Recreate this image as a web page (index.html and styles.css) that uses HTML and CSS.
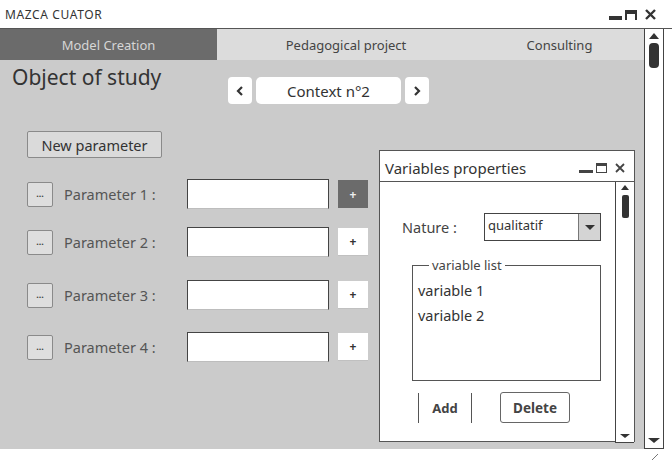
FILE: index.html
```html
<!DOCTYPE html>
<html lang="en">
<head>
<meta charset="utf-8">
<title>MAZCA CUATOR</title>
<link rel="stylesheet" href="styles.css">
</head>
<body>
<div class="window">
  <header class="titlebar">
    <span class="app-name">MAZCA CUATOR</span>
    <div class="win-controls">
      <span class="ctl-min"></span>
      <span class="ctl-max"></span>
      <svg class="ctl-close" width="11" height="11" viewBox="0 0 11 11"><path d="M1 1 L10 10 M10 1 L1 10" stroke="#333" stroke-width="2.4"/></svg>
    </div>
  </header>

  <div class="frame">
    <div class="main">
      <nav class="tabs">
        <span class="tab active">Model Creation</span>
        <span class="tab">Pedagogical project</span>
        <span class="tab">Consulting</span>
      </nav>

      <section class="workspace">
        <div class="heading-row">
          <h1 class="heading">Object of study</h1>
          <div class="context-nav">
            <button class="nav-btn">
              <svg width="8" height="10" viewBox="0 0 8 10"><path d="M6 1 L2 5 L6 9" fill="none" stroke="#333" stroke-width="2.2"/></svg>
            </button>
            <span class="context-label">Context n°2</span>
            <button class="nav-btn">
              <svg width="8" height="10" viewBox="0 0 8 10"><path d="M2 1 L6 5 L2 9" fill="none" stroke="#333" stroke-width="2.2"/></svg>
            </button>
          </div>
        </div>

        <button class="btn-new">New parameter</button>

        <div class="params">
          <div class="param-row">
            <button class="btn-more">...</button>
            <span class="param-label">Parameter 1 :</span>
            <span class="param-input"></span>
            <button class="btn-plus dark">+</button>
          </div>
          <div class="param-row">
            <button class="btn-more">...</button>
            <span class="param-label">Parameter 2 :</span>
            <span class="param-input"></span>
            <button class="btn-plus">+</button>
          </div>
          <div class="param-row">
            <button class="btn-more">...</button>
            <span class="param-label">Parameter 3 :</span>
            <span class="param-input"></span>
            <button class="btn-plus">+</button>
          </div>
          <div class="param-row">
            <button class="btn-more">...</button>
            <span class="param-label">Parameter 4 :</span>
            <span class="param-input"></span>
            <button class="btn-plus">+</button>
          </div>
        </div>
      </section>
    </div>

    <div class="scrollbar">
      <span class="arrow-up"></span>
      <span class="thumb"></span>
      <span class="arrow-down"></span>
    </div>
  </div>

  <footer class="statusbar">
    <svg class="grip" width="8" height="8" viewBox="0 0 8 8"><path d="M1 7 L7 1" stroke="#777" stroke-width="1"/></svg>
  </footer>

  <div class="dialog">
    <div class="dialog-title">
      <span>Variables properties</span>
      <div class="win-controls small">
        <span class="ctl-min"></span>
        <span class="ctl-max"></span>
        <svg class="ctl-close" width="10" height="10" viewBox="0 0 10 10"><path d="M1 1 L9 9 M9 1 L1 9" stroke="#444" stroke-width="1.8"/></svg>
      </div>
    </div>
    <div class="dialog-body">
      <div class="dialog-content">
        <div class="nature-row">
          <span class="nature-label">Nature :</span>
          <div class="select">
            <span class="select-value">qualitatif</span>
            <span class="select-btn"><span class="tri-down"></span></span>
          </div>
        </div>

        <fieldset class="var-list">
          <legend>variable list</legend>
          <div class="var-item">variable 1</div>
          <div class="var-item">variable 2</div>
        </fieldset>

        <div class="dialog-actions">
          <button class="btn-add">Add</button>
          <button class="btn-delete">Delete</button>
        </div>
      </div>
      <div class="scrollbar small">
        <span class="arrow-up"></span>
        <span class="thumb"></span>
        <span class="arrow-down"></span>
      </div>
    </div>
  </div>
</div>
</body>
</html>
```

FILE: styles.css
```css
* { box-sizing: border-box; }

html, body {
  margin: 0;
  padding: 0;
  background: #fff;
}

body {
  font-family: "Noto Sans", "DejaVu Sans", sans-serif;
  color: #333;
  width: 672px;
  height: 463px;
  overflow: hidden;
}

button {
  font-family: inherit;
  padding: 0;
  cursor: pointer;
}

.window {
  position: relative;
  display: flex;
  flex-direction: column;
  height: 463px;
}

/* ---- title bar ---- */
.titlebar {
  height: 29px;
  display: flex;
  align-items: center;
  justify-content: space-between;
  padding: 0 16px 0 5px;
  border-bottom: 1px solid #555;
}

.app-name {
  font-size: 12px;
  letter-spacing: 0.6px;
  color: #333;
  padding-top: 1px;
}

.win-controls {
  display: flex;
  align-items: flex-end;
  gap: 3px;
  padding-top: 2px;
}

.win-controls .ctl-close { margin-left: 5px; }

.ctl-min {
  width: 13px;
  height: 4px;
  background: #333;
  margin-bottom: 1px;
}

.ctl-max {
  width: 12px;
  height: 10px;
  border: 2px solid #333;
  border-top-width: 4px;
  border-bottom: none;
  margin-bottom: 1px;
}

.ctl-close { display: block; margin-bottom: 1px; }

/* ---- frame: main area + vertical scrollbar ---- */
.frame {
  display: flex;
  height: 420px;
  padding-right: 8px;
}

.main {
  flex: 1;
  min-width: 0;
  display: flex;
  flex-direction: column;
}

.tabs {
  height: 31px;
  display: flex;
  background: #dcdcdc;
}

.tab {
  display: flex;
  align-items: center;
  justify-content: center;
  font-size: 13px;
  color: #444;
  width: 217px;
  flex-shrink: 0;
}

.tab:nth-child(2) { width: 258px; }
.tab:nth-child(3) { flex: 1; width: auto; }

.tab.active {
  background: #6b6b6b;
  color: #d6d6d6;
}

.workspace {
  flex: 1;
  background: #cbcbcb;
  padding: 3px 0 0 0;
}

.heading-row {
  display: flex;
  align-items: flex-start;
}

.heading {
  flex: 0 0 228px;
  margin: 0;
  padding-left: 12px;
  font-weight: normal;
  font-size: 21px;
  line-height: 28px;
  color: #333;
}

.context-nav {
  display: flex;
  gap: 4px;
  margin-top: 14px;
}

.nav-btn {
  width: 24px;
  height: 27px;
  border: none;
  background: #fff;
  border-radius: 4px;
  display: flex;
  align-items: center;
  justify-content: center;
}

.context-label {
  width: 145px;
  height: 27px;
  background: #fff;
  border-radius: 5px;
  display: flex;
  align-items: center;
  justify-content: center;
  font-size: 15px;
  color: #333;
}

.btn-new {
  display: block;
  margin: 27px 0 0 27px;
  width: 135px;
  height: 27px;
  background: #dadada;
  border: 1px solid #8a8a8a;
  border-radius: 2px;
  font-size: 14.5px;
  color: #333;
}

.params {
  display: flex;
  flex-direction: column;
  margin-top: 21px;
  padding-left: 27px;
}

.param-row {
  display: flex;
  align-items: center;
  height: 30px;
}

.param-row:nth-child(2) { margin-top: 18px; }
.param-row:nth-child(3) { margin-top: 23px; }
.param-row:nth-child(4) { margin-top: 22px; }

.btn-more {
  width: 26px;
  height: 25px;
  background: #dedede;
  border: 1px solid #8a8a8a;
  border-radius: 2px;
  font-size: 9px;
  line-height: 10px;
  color: #444;
  font-weight: bold;
}

.param-label {
  width: 134px;
  padding-left: 11px;
  font-size: 14.5px;
  color: #555;
}

.param-input {
  width: 142px;
  height: 30px;
  background: #fff;
  border: 1px solid #444;
  border-bottom-color: #bdbdbd;
}

.btn-plus {
  width: 30px;
  height: 28px;
  margin-left: 9px;
  background: #fff;
  border: none;
  border-bottom: 1px solid #c0c0c0;
  font-size: 12px;
  font-weight: bold;
  color: #333;
}

.btn-plus.dark {
  background: #6b6b6b;
  color: #eee;
  border-bottom: none;
}

/* ---- scrollbars ---- */
.scrollbar {
  flex-shrink: 0;
  width: 20px;
  border: 1px solid #444;
  border-top: none;
  background: #fff;
  display: flex;
  flex-direction: column;
  align-items: center;
  padding-top: 4px;
}

.arrow-up {
  width: 0;
  height: 0;
  border-left: 5px solid transparent;
  border-right: 5px solid transparent;
  border-bottom: 6px solid #333;
}

.thumb {
  width: 10px;
  height: 25px;
  margin-top: 4px;
  background: #333;
  border-radius: 4px;
}

.arrow-down {
  margin-top: auto;
  margin-bottom: 5px;
  width: 0;
  height: 0;
  border-left: 6px solid transparent;
  border-right: 6px solid transparent;
  border-top: 5px solid #333;
}

.statusbar {
  flex: 1;
  display: flex;
  justify-content: flex-end;
  align-items: flex-end;
  padding: 0 13px 2px 0;
}

/* ---- floating dialog ---- */
.dialog {
  position: absolute;
  left: 379px;
  top: 150px;
  width: 256px;
  height: 292px;
  background: #fff;
  border: 1px solid #555;
  display: flex;
  flex-direction: column;
}

.dialog-title {
  height: 31px;
  display: flex;
  align-items: center;
  justify-content: space-between;
  padding: 4px 9px 0 5px;
  border-bottom: 1px solid #555;
  font-size: 15px;
  color: #333;
}

.win-controls.small { gap: 3px; padding-top: 0; }
.win-controls.small .ctl-close { margin-left: 5px; }
.win-controls.small .ctl-min { width: 14px; height: 3px; background: #444; }
.win-controls.small .ctl-max { width: 11px; height: 10px; border: 1.5px solid #444; border-top-width: 3px; border-bottom: 1.5px solid #444; }

.dialog-body {
  flex: 1;
  display: flex;
}

.dialog-content {
  flex: 1;
  padding: 31px 0 0 22px;
}

.scrollbar.small {
  width: 19px;
  border-top: none;
  border-right: none;
  border-bottom: 1px solid #444;
  margin-bottom: -2px;
  padding-top: 3px;
}

.scrollbar.small .arrow-up { border-left-width: 4px; border-right-width: 4px; border-bottom-width: 5px; }
.scrollbar.small .thumb { width: 7px; height: 23px; margin-top: 5px; border-radius: 2px; }
.scrollbar.small .arrow-down { border-left-width: 5px; border-right-width: 5px; border-top-width: 4px; margin-bottom: 4px; }

.nature-row {
  display: flex;
  align-items: center;
  height: 28px;
}

.nature-label {
  width: 82px;
  font-size: 14.5px;
  color: #444;
}

.select {
  width: 117px;
  height: 28px;
  display: flex;
  border: 1px solid #444;
}

.select-value {
  flex: 1;
  font-size: 13px;
  line-height: 16px;
  padding: 3px 0 0 3px;
  color: #333;
}

.select-btn {
  width: 22px;
  background: #d4d4d4;
  border-left: 1px solid #777;
  display: flex;
  align-items: center;
  justify-content: center;
}

.tri-down {
  width: 0;
  height: 0;
  border-left: 5px solid transparent;
  border-right: 5px solid transparent;
  border-top: 5px solid #333;
}

.var-list {
  margin: 16px 0 0 10px;
  width: 189px;
  height: 124px;
  border: 1px solid #555;
  padding: 0 0 0 5px;
}

.var-list legend {
  font-size: 13px;
  line-height: 16px;
  color: #444;
  padding: 0 3px;
  margin-left: 11px;
}

.var-item {
  font-size: 14.5px;
  color: #333;
  line-height: 25px;
}

.var-item:first-of-type { margin-top: 5px; }

.dialog-actions {
  display: flex;
  align-items: center;
  margin: 11px 0 0 16px;
}

.btn-add {
  width: 54px;
  height: 30px;
  background: #fff;
  border: none;
  border-left: 1px solid #555;
  border-right: 1px solid #555;
  font-size: 13px;
  font-weight: bold;
  color: #444;
}

.btn-delete {
  margin-left: 28px;
  width: 70px;
  height: 31px;
  background: #fff;
  border: 1px solid #666;
  border-radius: 3px;
  font-size: 13.5px;
  font-weight: bold;
  color: #444;
}
```
